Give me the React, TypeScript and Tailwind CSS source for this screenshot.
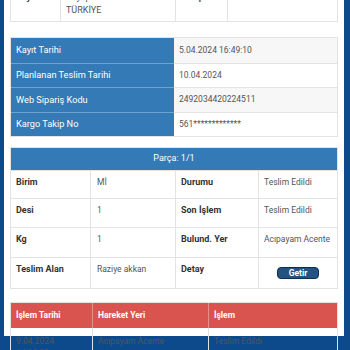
import React from 'react';

const infoRows = [
	{ label: 'Kayıt Tarihi', value: '5.04.2024 16:49:10' },
	{ label: 'Planlanan Teslim Tarihi', value: '10.04.2024' },
	{ label: 'Web Sipariş Kodu', value: '2492034420224511' },
	{ label: 'Kargo Takip No', value: '561*************' },
];

const partRows = [
	{ l1: 'Birim', v1: 'Mİ', l2: 'Durumu', v2: 'Teslim Edildi', h: 'h-[28px]' },
	{ l1: 'Desi', v1: '1', l2: 'Son İşlem', v2: 'Teslim Edildi', h: 'h-[29px]' },
	{ l1: 'Kg', v1: '1', l2: 'Bulund. Yer', v2: 'Acıpayam Acente', h: 'h-[30px]' },
	{ l1: 'Teslim Alan', v1: 'Raziye akkan', l2: 'Detay', v2: null, h: 'h-[31px]' },
];

export default function App() {
	return (
		<div
			className="h-[350px] w-[350px] overflow-hidden bg-[#0c4a8c] pl-[4px] pr-[6px]"
			style={{ fontFamily: 'Roboto, "Noto Sans", sans-serif' }}
		>
			<div className="h-full bg-white px-[6px]">
				{/* Address table (scrolled, top cut off) */}
				<div className="-mt-[14px] grid h-[36px] grid-cols-[50px_115px_52px_113px] border border-t-0 border-[#e3e3e3] text-[9px] leading-[13px]">
					<div className="border-r border-[#e3e3e3] px-[5px] pt-[5px] font-bold text-[#333]">Kaynak</div>
					<div className="border-r border-[#e3e3e3] px-[5px] pt-[5px] text-[#555]">
						Kayapınar / DİYARBAKIR / TÜRKİYE
					</div>
					<div className="border-r border-[#e3e3e3] px-[5px] pt-[5px] font-bold text-[#333]">Varış</div>
					<div className="px-[5px] pt-[5px] text-[#555]">DENİZLİ / TÜRKİYE</div>
				</div>

				{/* Shipment info */}
				<div className="mt-[15px] border border-[#e3e3e3]">
					{infoRows.map((row, i) => (
						<div key={row.label} className="grid grid-cols-2">
							<div
								className={`flex h-[24.5px] items-center bg-[#337ab7] px-[5px] text-[9.2px] text-white ${
									i > 0 ? 'border-t border-[#6fa3d3]' : ''
								}`}
							>
								{row.label}
							</div>
							<div
								className={`flex h-[24.5px] items-center px-[5px] text-[8.5px] text-[#555] ${
									i % 2 === 0 ? 'bg-[#f7f7f7]' : 'bg-white'
								} ${i > 0 ? 'border-t border-[#e3e3e3]' : ''}`}
							>
								{row.value}
							</div>
						</div>
					))}
				</div>

				{/* Part info */}
				<div className="mt-[10px] border border-[#e3e3e3]">
					<div className="flex h-[22px] items-center justify-center bg-[#337ab7] text-[9px] text-white">
						Parça: 1/1
					</div>
					{partRows.map((row) => (
						<div
							key={row.l1}
							className={`grid grid-cols-[80px_85px_83px_1fr] border-t border-[#e3e3e3] ${row.h}`}
						>
							<div className="border-r border-[#e3e3e3] px-[5px] pt-[5px] text-[9px] font-bold text-[#333]">
								{row.l1}
							</div>
							<div className="border-r border-[#e3e3e3] px-[6px] pt-[5px] text-[8.5px] text-[#555]">{row.v1}</div>
							<div className="border-r border-[#e3e3e3] px-[5px] pt-[5px] text-[9px] font-bold text-[#333]">
								{row.l2}
							</div>
							<div className="px-[5px] pt-[5px] text-[8.5px] text-[#555]">
								{row.v2 ?? (
									<div className="flex justify-center pt-[4px]">
										<button className="h-[12px] w-[42px] rounded-[4px] border border-[#0f2d4d] bg-[#245382] text-[8.5px] font-bold leading-[10px] text-white">
											Getir
										</button>
									</div>
								)}
							</div>
						</div>
					))}
				</div>

				{/* Movements */}
				<div className="mt-[13px] border border-[#e3e3e3]">
					<div className="grid h-[25px] grid-cols-[82px_116px_1fr] bg-[#d9534f] text-[8.5px] font-bold text-white">
						<div className="flex items-center border-r border-[#e98f8c] px-[5px]">İşlem Tarihi</div>
						<div className="flex items-center border-r border-[#e98f8c] px-[5px]">Hareket Yeri</div>
						<div className="flex items-center px-[5px]">İşlem</div>
					</div>
					<div className="grid grid-cols-[82px_116px_1fr] text-[8.5px] text-[#555]">
						<div className="border-r border-[#e3e3e3] px-[5px] pt-[7px] leading-[12px]">
							9.04.2024
							<br />
							14:38:22
						</div>
						<div className="border-r border-[#e3e3e3] px-[5px] pt-[7px] leading-[12px]">Acıpayam Acente</div>
						<div className="px-[5px] pt-[7px] leading-[12px]">Teslim Edildi</div>
					</div>
				</div>
			</div>
		</div>
	);
}
